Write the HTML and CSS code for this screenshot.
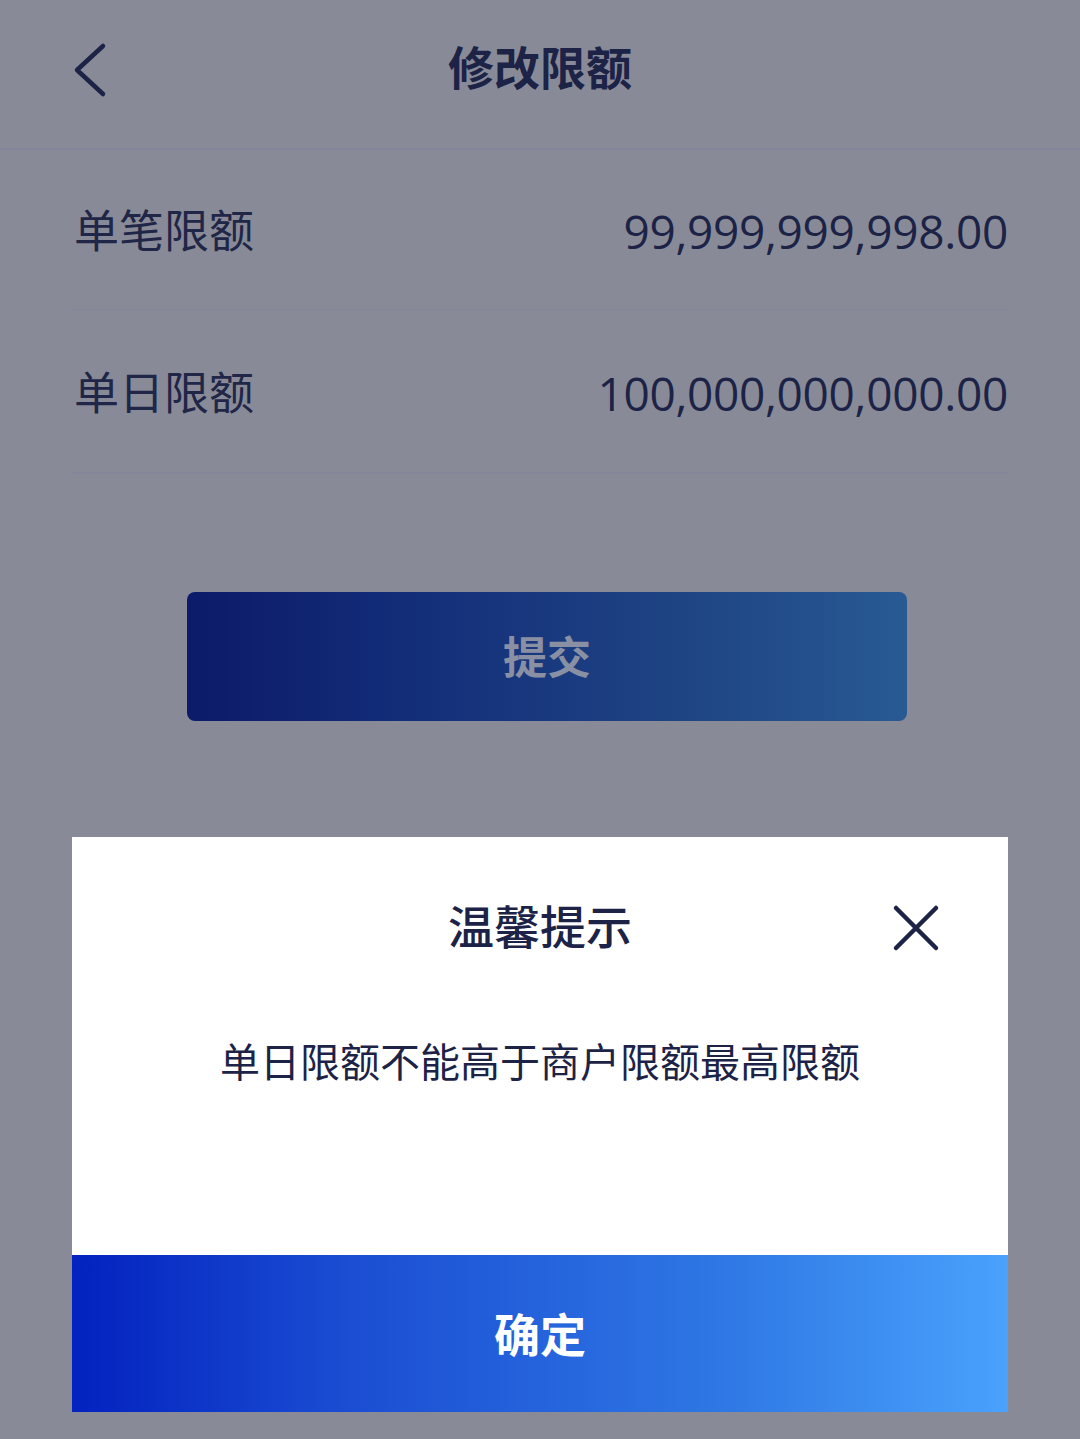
FILE: index.html
```html
<!DOCTYPE html>
<html lang="zh-CN">
<head>
<meta charset="utf-8">
<title>修改限额</title>
<link rel="stylesheet" href="styles.css">
</head>
<body>
<div class="page">
  <header class="nav">
    <svg class="back" viewBox="0 0 40 60" width="40" height="60"><path d="M31 6 L5 30 L31 54" fill="none" stroke="#1c2347" stroke-width="4.5" stroke-linecap="round" stroke-linejoin="round"/></svg>
    <h1 class="nav-title">修改限额</h1>
  </header>
  <section class="list">
    <div class="row"><span class="label">单笔限额</span><span class="value">99,999,999,998.00</span></div>
    <div class="row"><span class="label">单日限额</span><span class="value">100,000,000,000.00</span></div>
  </section>
  <div class="submit-wrap"><button class="submit">提交</button></div>
  <div class="dialog">
    <div class="dialog-head">
      <h2 class="dialog-title">温馨提示</h2>
      <svg class="close" viewBox="0 0 48 48" width="48" height="48"><path d="M4 4 L44 44 M44 4 L4 44" fill="none" stroke="#1c2347" stroke-width="4.5" stroke-linecap="round"/></svg>
    </div>
    <p class="dialog-msg">单日限额不能高于商户限额最高限额</p>
    <button class="confirm">确定</button>
  </div>
</div>
</body>
</html>
```

FILE: styles.css
```css
html, body {
  margin: 0;
  padding: 0;
}
body {
  background: #888b97;
  font-family: "Noto Sans CJK SC", "Noto Sans", sans-serif;
  color: #1c2347;
  width: 1080px;
  height: 1439px;
  overflow: hidden;
}
.page {
  display: flex;
  flex-direction: column;
}
.nav {
  height: 150px;
  border-bottom: 2px solid #83869a;
  display: flex;
  align-items: center;
  justify-content: center;
  position: relative;
  box-sizing: border-box;
  padding-bottom: 18px;
}
.back {
  position: absolute;
  left: 72px;
  top: 40px;
}
.nav-title {
  margin: 0;
  font-size: 46px;
  font-weight: 700;
  letter-spacing: 0;
  color: #1c2347;
}
.list {
  margin: 0 72px;
}
.row {
  height: 163px;
  border-bottom: 2px solid #84879a;
  display: flex;
  align-items: center;
  justify-content: space-between;
  box-sizing: border-box;
  padding-bottom: 2px;
}
.row:first-child {
  height: 161px;
}
.label {
  font-size: 45px;
  font-weight: 400;
  color: #1f2647;
  padding-left: 2px;
}
.value {
  font-family: "Open Sans", "Noto Sans", sans-serif;
  font-size: 46px;
  font-weight: 400;
  letter-spacing: -0.3px;
  color: #1c2347;
  padding-top: 4px;
}
.submit-wrap {
  display: flex;
  justify-content: center;
  padding-top: 118px;
  padding-left: 14px;
}
.submit {
  width: 720px;
  height: 129px;
  border: none;
  border-radius: 8px;
  background: linear-gradient(90deg, #0c1a69 0%, #132d79 30%, #1f4584 70%, #285a93 100%);
  color: #8a90a4;
  font-family: "Noto Sans CJK SC", sans-serif;
  font-size: 44px;
  font-weight: 700;
  padding: 0 0 4px;
}
.dialog {
  margin: 116px 72px 0;
  background: #ffffff;
  display: flex;
  flex-direction: column;
  height: 575px;
}
.dialog-head {
  height: 180px;
  display: flex;
  align-items: center;
  justify-content: center;
  position: relative;
  box-sizing: border-box;
  padding-bottom: 6px;
}
.dialog-title {
  margin: 0;
  font-size: 46px;
  font-weight: 500;
  color: #1c2347;
}
.close {
  position: absolute;
  right: 68px;
  top: 67px;
}
.dialog-msg {
  margin: 0;
  text-align: center;
  font-size: 40px;
  font-weight: 400;
  color: #1c2347;
  line-height: 56px;
  flex: 1;
  padding-top: 15px;
}
.confirm {
  height: 157px;
  border: none;
  background: linear-gradient(90deg, #0322bf 0%, #1b4ed3 30%, #2f78e5 70%, #4aa2fc 100%);
  color: #ffffff;
  font-family: "Noto Sans CJK SC", sans-serif;
  font-size: 46px;
  font-weight: 700;
  padding: 0 0 4px;
}
```
